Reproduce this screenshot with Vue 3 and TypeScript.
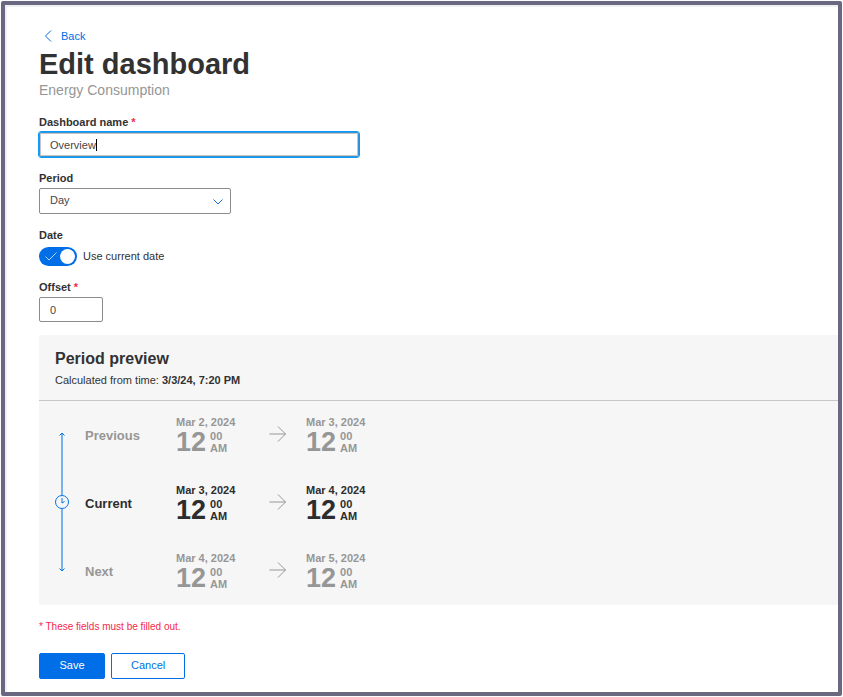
<script setup lang="ts">
import { computed, onMounted, ref } from 'vue'

interface PeriodRow {
  label: string
  from: string
  to: string
  current: boolean
}

const name = ref('Overview')
const period = ref('Day')
const useCurrentDate = ref(true)
const offset = ref('0')
const nameInput = ref<HTMLInputElement | null>(null)

const rows: PeriodRow[] = [
  { label: 'Previous', from: 'Mar 2, 2024', to: 'Mar 3, 2024', current: false },
  { label: 'Current', from: 'Mar 3, 2024', to: 'Mar 4, 2024', current: true },
  { label: 'Next', from: 'Mar 4, 2024', to: 'Mar 5, 2024', current: false },
]

// The caret is drawn steadily at the end of the typed name.
const measure = document.createElement('canvas').getContext('2d')
const caretLeft = computed(() => {
  if (!measure) return '11px'
  measure.font = '11px "Liberation Sans", Arial, sans-serif'
  return `${Math.round(measure.measureText(name.value).width) + 11}px`
})

onMounted(() => {
  const el = nameInput.value
  if (el) {
    el.focus()
    el.setSelectionRange(el.value.length, el.value.length)
  }
})
</script>

<template>
  <main class="page">
    <form class="form" @submit.prevent>
      <header class="header">
        <a class="back" href="#">
          <svg width="8" height="12" viewBox="0 0 8 12" aria-hidden="true">
            <path d="M7 .5 1.5 6 7 11.5" />
          </svg>
          Back
        </a>
        <h1>Edit dashboard</h1>
        <p class="subtitle">Energy Consumption</p>
      </header>

      <div class="field field-name">
        <label class="label" for="name">Dashboard name <span class="required">*</span></label>
        <div class="name-wrap">
          <input id="name" ref="nameInput" v-model="name" class="control name" type="text" />
          <span class="caret" :style="{ left: caretLeft }"></span>
        </div>
      </div>

      <div class="field field-period">
        <label class="label" for="period">Period</label>
        <div class="select-wrap">
          <select id="period" v-model="period" class="control select">
            <option>Day</option>
          </select>
          <svg class="chevron" width="10" height="6" viewBox="0 0 10 6" aria-hidden="true">
            <path d="M.5 .5 5 5 9.500 .5" />
          </svg>
        </div>
      </div>

      <div class="field field-date">
        <span class="label">Date</span>
        <label class="switch">
          <input v-model="useCurrentDate" class="switch-input" type="checkbox" />
          <span class="track">
            <svg width="12" height="9" viewBox="0 0 12 9" aria-hidden="true">
              <path d="M.5 4.500 4 8 11.500 .5" />
            </svg>
            <span class="knob"></span>
          </span>
          <span class="switch-text">Use current date</span>
        </label>
      </div>

      <div class="field field-offset">
        <label class="label" for="offset">Offset <span class="required">*</span></label>
        <input id="offset" v-model="offset" class="control offset" type="text" />
      </div>

      <section class="preview">
        <div class="preview-head">
          <h2>Period preview</h2>
          <p>Calculated from time: <strong>3/3/24, 7:20 PM</strong></p>
        </div>
        <div class="preview-body">
          <svg class="timeline" width="16" height="140" viewBox="0 0 16 140" aria-hidden="true">
            <path class="line" d="M7 1V63M7 77V139" />
            <path class="tip" d="M4.500 3.500 7 1 9.500 3.500M4.500 136.500 7 139 9.500 136.500" />
            <circle class="tip" cx="7" cy="70" r="6.500" />
            <path class="tip" d="M7 66V71L9.500 69.500" />
          </svg>
          <div class="rows">
            <div v-for="row in rows" :key="row.label" class="row" :class="{ current: row.current }">
              <span class="row-label">{{ row.label }}</span>
              <div class="moment">
                <span class="date">{{ row.from }}</span>
                <div class="time"><span class="hour">12</span><span class="minor"><span>00</span><span>AM</span></span></div>
              </div>
              <svg class="arrow" width="18" height="16" viewBox="0 0 18 16" aria-hidden="true">
                <path d="M.5 8H16.500M9 .5 16.500 8 9 15.500" />
              </svg>
              <div class="moment">
                <span class="date">{{ row.to }}</span>
                <div class="time"><span class="hour">12</span><span class="minor"><span>00</span><span>AM</span></span></div>
              </div>
            </div>
          </div>
        </div>
      </section>

      <p class="note">* These fields must be filled out.</p>

      <div class="actions">
        <button class="button primary" type="submit">Save</button>
        <button class="button" type="button">Cancel</button>
      </div>
    </form>
  </main>
</template>

<style>
body {
  margin: 0;
  background: #fbfbfd;
}
</style>

<style scoped>
* {
  box-sizing: border-box;
}
.page {
  margin: 0;
  padding: 1px;
  min-height: 100vh;
  display: flex;
  font: 11px/14px "Liberation Sans", Arial, sans-serif;
  color: #323232;
}
.form {
  flex: 1;
  border: 4px solid #696880;
  border-radius: 2px;
  background: #fff;
  box-shadow: inset 2px 2px 0 #f0f0f2;
  padding: 24px 0 12px 34px;
}
h1,
h2,
p {
  margin: 0;
}
.back {
  display: flex;
  align-items: center;
  gap: 9px;
  width: max-content;
  padding-left: 5px;
  color: #006ee6;
  text-decoration: none;
}
svg path,
svg circle {
  fill: none;
  stroke: currentColor;
}
h1 {
  font-size: 29px;
  line-height: 36px;
  margin-top: 3px;
}
.subtitle {
  font-size: 14px;
  line-height: 16px;
  color: #969696;
}
.field {
  display: flex;
  flex-direction: column;
  align-items: flex-start;
  gap: 3px;
}
.label {
  font-weight: bold;
}
.required {
  color: #f5284b;
}
.control {
  display: block;
  font: inherit;
  color: #464646;
  height: 25px;
  border: 1px solid #8c8c8c;
  border-radius: 2px;
  background: #fff;
  padding: 0 10px;
  margin: 0;
}
.field-name {
  margin-top: 17px;
}
.name-wrap {
  position: relative;
}
.name {
  width: 320px;
  caret-color: transparent;
}
.name:focus {
  outline: 1px solid #0c9bfa;
  border-color: #3094d8;
  box-shadow: inset 0 0 0 1px #c8c4c0;
}
.caret {
  position: absolute;
  top: 7px;
  width: 1px;
  height: 12px;
  background: #000;
  pointer-events: none;
}
.field-period {
  margin-top: 14px;
}
.select-wrap {
  position: relative;
  width: 192px;
}
.select {
  appearance: none;
  width: 100%;
  height: 26px;
  padding-bottom: 2px;
}
.chevron {
  position: absolute;
  right: 8px;
  top: 11px;
  color: #1c6fc4;
  pointer-events: none;
}
.field-date {
  margin-top: 14px;
  gap: 5px;
}
.switch {
  display: flex;
  align-items: center;
  gap: 6px;
}
.switch-text {
  padding-bottom: 2px;
}
.switch-input {
  position: absolute;
  opacity: 0;
  margin: 0;
}
.track {
  display: flex;
  align-items: center;
  justify-content: space-between;
  width: 38px;
  height: 19px;
  border-radius: 10px;
  background: #006ee6;
  color: #b4d6fa;
  padding: 0 2px 0 6px;
}
.knob {
  width: 15px;
  height: 15px;
  border-radius: 50%;
  background: #fff;
}
.field-offset {
  margin-top: 14px;
}
.offset {
  width: 64px;
}
.preview {
  margin-top: 13px;
  background: #f6f6f6;
  border-radius: 2px 0 0 2px;
}
.preview-head {
  padding: 14px 16px 13px;
  border-bottom: 1px solid #c8c8c8;
}
h2 {
  font-size: 16px;
  line-height: 20px;
  margin-bottom: 4px;
}
.preview-body {
  display: flex;
  gap: 14px;
  padding: 14px 16px;
}
.timeline {
  flex: none;
  margin-top: 17px;
  color: #0073e6;
}
.line {
  stroke: #78b2ed;
  stroke-width: 2;
}
.rows {
  display: flex;
  flex-direction: column;
  gap: 28px;
}
.row {
  display: flex;
  align-items: center;
  height: 40px;
  color: #969696;
  font-weight: bold;
}
.row.current {
  color: #2d2d2d;
}
.row-label {
  width: 91px;
  padding-top: 2px;
  font-size: 13px;
}
.moment {
  width: 93px;
}
.date {
  display: block;
}
.time {
  display: flex;
  gap: 4px;
  align-items: center;
}
.hour {
  font-size: 27px;
  line-height: 26px;
}
.minor {
  display: flex;
  flex-direction: column;
  line-height: 12px;
}
.arrow {
  width: 18px;
  margin-right: 19px;
  margin-bottom: 2px;
  color: #969696;
}
.timeline .line {
  stroke: #78b2ed;
}
.note {
  margin-top: 15px;
  font-size: 10px;
  color: #f5284b;
}
.actions {
  display: flex;
  gap: 6px;
  margin-top: 19px;
}
.button {
  height: 26px;
  min-width: 66px;
  padding: 0 19px 2px;
  border: 1px solid #006ee6;
  border-radius: 2px;
  background: #fff;
  color: #006ee6;
  font: inherit;
}
.primary {
  background: #006ee6;
  color: #fff;
}
</style>
